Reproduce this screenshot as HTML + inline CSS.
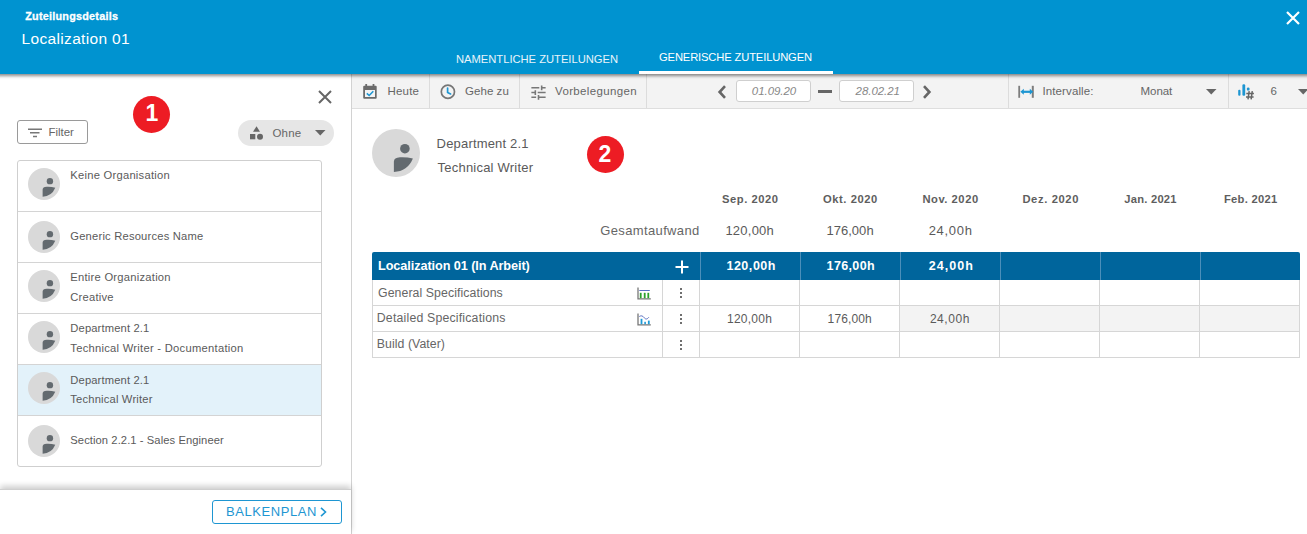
<!DOCTYPE html>
<html><head><meta charset="utf-8">
<style>
*{margin:0;padding:0;box-sizing:border-box}
html,body{width:1307px;height:534px;overflow:hidden;background:#fff;font-family:"Liberation Sans",sans-serif}
.a{position:absolute}
.t{position:absolute;white-space:nowrap;line-height:1;z-index:10}
svg{position:absolute;overflow:visible}
</style></head><body>
<!-- left panel -->
<div class="a" style="left:0;top:74px;width:351px;height:460px;background:#fff"></div>
<div class="a" style="left:351px;top:74px;width:1px;height:460px;background:#d2d2d2"></div>
<!-- toolbar -->
<div class="a" style="left:352px;top:74px;width:955px;height:35px;background:#f3f3f3;border-bottom:1px solid #dedede"></div>
<div class="a" style="left:429px;top:74px;width:1px;height:34px;background:#dcdcdc"></div>
<div class="a" style="left:519px;top:74px;width:1px;height:34px;background:#dcdcdc"></div>
<div class="a" style="left:646px;top:74px;width:1px;height:34px;background:#dcdcdc"></div>
<div class="a" style="left:1008px;top:74px;width:1px;height:34px;background:#dcdcdc"></div>
<div class="a" style="left:1228px;top:74px;width:1px;height:34px;background:#dcdcdc"></div>
<!-- header -->
<div class="a" style="left:-10px;top:0;width:1330px;height:74px;background:#0093d0;box-shadow:0 2px 3px rgba(0,0,0,0.45);z-index:5"></div>
<div class="a" style="left:639px;top:71px;width:194px;height:3px;background:#fff;z-index:6"></div>
<svg style="left:1286px;top:11px;z-index:6" width="14" height="14" viewBox="0 0 14 14"><path d="M1 1L13 13M13 1L1 13" stroke="#fff" stroke-width="2.2"/></svg>
<!-- left panel content -->
<svg style="left:318px;top:90px" width="14" height="14" viewBox="0 0 14 14"><path d="M1 1L13 13M13 1L1 13" stroke="#666" stroke-width="2"/></svg>
<div class="a" style="left:17px;top:120px;width:71px;height:24px;border:1px solid #9a9a9a;border-radius:3px"></div>
<svg style="left:28px;top:128px" width="15" height="10" viewBox="0 0 15 10"><path d="M0 1.3H14M2 4.8H11.5M5 8.5H9" stroke="#777" stroke-width="1.4"/></svg>
<div class="a" style="left:238px;top:120px;width:96px;height:26px;border-radius:13px;background:#e6e6e6"></div>
<svg style="left:249px;top:126px" width="15" height="14" viewBox="0 0 15 14"><path d="M7.5 0.3L11 5.7H4Z" fill="#666"/><rect x="1" y="8" width="5.3" height="5.3" fill="#666"/><circle cx="11" cy="10.8" r="3" fill="#666"/></svg>
<svg style="left:315px;top:130px" width="11" height="6" viewBox="0 0 11 6"><path d="M0 0H10.5L5.25 5.5Z" fill="#666"/></svg>
<div class="a" style="left:133px;top:96px;width:37px;height:37px;border-radius:50%;background:#ed1c24"></div>
<div class="a" style="left:587px;top:136px;width:37px;height:37px;border-radius:50%;background:#ed1c24"></div>
<!-- list -->
<div class="a" style="left:17px;top:160px;width:305px;height:307px;border:1px solid #cfcfcf;border-radius:3px;overflow:hidden">
  <div class="a" style="left:0;top:204px;width:303px;height:50px;background:#e3f2fa"></div>
  <div class="a" style="left:0;top:50px;width:303px;height:1px;background:#d4d4d4"></div>
  <div class="a" style="left:0;top:101px;width:303px;height:1px;background:#d4d4d4"></div>
  <div class="a" style="left:0;top:152px;width:303px;height:1px;background:#d4d4d4"></div>
  <div class="a" style="left:0;top:203px;width:303px;height:1px;background:#d4d4d4"></div>
  <div class="a" style="left:0;top:254px;width:303px;height:1px;background:#d4d4d4"></div>
</div>
<svg style="left:28px;top:168px" width="32" height="32" viewBox="0 0 48 48"><circle cx="24" cy="24" r="24" fill="#d9d9d9"/><circle cx="32.9" cy="19.7" r="4.8" fill="#636a6f"/><path d="M21.9 43V32.5Q21.9 28.6 28 28.3Q35 28 40.9 29.6Q35.5 42.6 21.9 43Z" fill="#636a6f"/></svg>
<svg style="left:28px;top:221px" width="32" height="32" viewBox="0 0 48 48"><circle cx="24" cy="24" r="24" fill="#d9d9d9"/><circle cx="32.9" cy="19.7" r="4.8" fill="#636a6f"/><path d="M21.9 43V32.5Q21.9 28.6 28 28.3Q35 28 40.9 29.6Q35.5 42.6 21.9 43Z" fill="#636a6f"/></svg>
<svg style="left:28px;top:270px" width="32" height="32" viewBox="0 0 48 48"><circle cx="24" cy="24" r="24" fill="#d9d9d9"/><circle cx="32.9" cy="19.7" r="4.8" fill="#636a6f"/><path d="M21.9 43V32.5Q21.9 28.6 28 28.3Q35 28 40.9 29.6Q35.5 42.6 21.9 43Z" fill="#636a6f"/></svg>
<svg style="left:28px;top:321px" width="32" height="32" viewBox="0 0 48 48"><circle cx="24" cy="24" r="24" fill="#d9d9d9"/><circle cx="32.9" cy="19.7" r="4.8" fill="#636a6f"/><path d="M21.9 43V32.5Q21.9 28.6 28 28.3Q35 28 40.9 29.6Q35.5 42.6 21.9 43Z" fill="#636a6f"/></svg>
<svg style="left:28px;top:372px" width="32" height="32" viewBox="0 0 48 48"><circle cx="24" cy="24" r="24" fill="#d9d9d9"/><circle cx="32.9" cy="19.7" r="4.8" fill="#636a6f"/><path d="M21.9 43V32.5Q21.9 28.6 28 28.3Q35 28 40.9 29.6Q35.5 42.6 21.9 43Z" fill="#636a6f"/></svg>
<svg style="left:28px;top:425px" width="32" height="32" viewBox="0 0 48 48"><circle cx="24" cy="24" r="24" fill="#d9d9d9"/><circle cx="32.9" cy="19.7" r="4.8" fill="#636a6f"/><path d="M21.9 43V32.5Q21.9 28.6 28 28.3Q35 28 40.9 29.6Q35.5 42.6 21.9 43Z" fill="#636a6f"/></svg>
<!-- footer -->
<div class="a" style="left:0;top:489px;width:351px;height:45px;background:#fff;border-top:1px solid #cfcfcf;box-shadow:0 -3px 6px rgba(0,0,0,0.2)"></div>
<div class="a" style="left:212px;top:500px;width:130px;height:24px;border:1px solid #1e96d2;border-radius:3px"></div>
<svg style="left:320px;top:507px" width="7" height="10" viewBox="0 0 7 10"><path d="M1 0.8L5.5 5L1 9.2" stroke="#1e96d2" stroke-width="1.6" fill="none"/></svg>
<!-- toolbar icons -->
<svg style="left:363px;top:84px" width="15" height="15" viewBox="0 0 15 15"><path fill-rule="evenodd" d="M1.2 1.8H12.7Q13.7 1.8 13.7 2.8V13.7Q13.7 14.7 12.7 14.7H1.2Q0.2 14.7 0.2 13.7V2.8Q0.2 1.8 1.2 1.8ZM2 6.1V13H12V6.1Z" fill="#6b6b6b"/><rect x="2.3" y="0" width="1.8" height="2.5" fill="#6b6b6b"/><rect x="9.6" y="0" width="1.8" height="2.5" fill="#6b6b6b"/><path d="M3.8 9.3L6.2 11.5L10.3 7.2" stroke="#1e96d2" stroke-width="1.6" fill="none"/></svg>
<svg style="left:440px;top:84px" width="16" height="16" viewBox="0 0 16 16"><circle cx="7.9" cy="7.8" r="6.6" fill="none" stroke="#767676" stroke-width="1.7"/><path d="M7.6 4.1V8.4L10.6 9.9" stroke="#1e96d2" stroke-width="1.7" fill="none" stroke-linecap="round" stroke-linejoin="round"/></svg>
<svg style="left:528.7px;top:82.7px" width="19" height="19" viewBox="0 0 24 24"><path d="M3 17v2h6v-2H3zM3 5v2h10V5H3zm10 16v-2h8v-2h-8v-2h-2v6h2zM7 9v2H3v2h4v2h2V9H7zm14 4v-2H11v2h10zm-6-4h2V7h4V5h-4V3h-2v6z" fill="#777"/></svg>
<svg style="left:717px;top:85px" width="10" height="14" viewBox="0 0 10 14"><path d="M8 1.2L2.6 7L8 12.8" stroke="#666" stroke-width="2.6" fill="none"/></svg>
<div class="a" style="left:736px;top:80px;width:75px;height:22px;background:#fff;border:1px solid #cfcfcf;border-radius:3px"></div>
<div class="a" style="left:818px;top:90px;width:14px;height:2.6px;background:#666"></div>
<div class="a" style="left:839px;top:80px;width:75px;height:22px;background:#fff;border:1px solid #cfcfcf;border-radius:3px"></div>
<svg style="left:922px;top:85px" width="10" height="14" viewBox="0 0 10 14"><path d="M2 1.2L7.4 7L2 12.8" stroke="#666" stroke-width="2.6" fill="none"/></svg>
<svg style="left:1018px;top:85px" width="16" height="13" viewBox="0 0 16 13"><rect x="0.3" y="0.8" width="1.8" height="12" fill="#7d7d7d"/><rect x="13.8" y="0.8" width="2" height="12" fill="#7d7d7d"/><path d="M5 6.8H12.5" stroke="#1e96d2" stroke-width="2.2"/><path d="M2.4 6.8L5.8 3.8V9.8Z M15.2 6.8L11.8 3.8V9.8Z" fill="#1e96d2"/></svg>
<svg style="left:1206px;top:89px" width="11" height="6" viewBox="0 0 11 6"><path d="M0 0H10.5L5.25 5.5Z" fill="#666"/></svg>
<svg style="left:1238px;top:84px" width="17" height="16" viewBox="0 0 17 16"><rect x="0.2" y="5.7" width="2.3" height="6" rx="1" fill="#1e96d2"/><rect x="4.4" y="0.3" width="2.8" height="11.4" rx="1.2" fill="#1e96d2"/><rect x="8.9" y="3.4" width="2.6" height="3.2" rx="1.2" fill="#1e96d2"/><path d="M11.2 7.2L10 15.3M14.3 7.2L13.1 15.3M8.3 9.6H15.9M8 12.9H15.6" stroke="#f3f3f3" stroke-width="3"/><path d="M11.2 7.2L10 15.3M14.3 7.2L13.1 15.3M8.3 9.6H15.9M8 12.9H15.6" stroke="#666" stroke-width="1.5"/></svg>
<svg style="left:1298px;top:89px" width="11" height="6" viewBox="0 0 11 6"><path d="M0 0H10.5L5.25 5.5Z" fill="#666"/></svg>
<!-- main avatar -->
<svg style="left:372px;top:129px" width="48" height="48" viewBox="0 0 48 48"><circle cx="24" cy="24" r="24" fill="#d9d9d9"/><circle cx="32.9" cy="19.7" r="4.8" fill="#636a6f"/><path d="M21.9 43V32.5Q21.9 28.6 28 28.3Q35 28 40.9 29.6Q35.5 42.6 21.9 43Z" fill="#636a6f"/></svg>
<!-- table -->
<div class="a" style="left:372px;top:252px;width:928px;height:28px;background:#00659c;border-radius:2px 2px 0 0"></div>
<div class="a" style="left:700px;top:252px;width:1px;height:28px;background:#4b8fba"></div>
<div class="a" style="left:800px;top:252px;width:1px;height:28px;background:#4b8fba"></div>
<div class="a" style="left:900px;top:252px;width:1px;height:28px;background:#4b8fba"></div>
<div class="a" style="left:1000px;top:252px;width:1px;height:28px;background:#4b8fba"></div>
<div class="a" style="left:1100px;top:252px;width:1px;height:28px;background:#4b8fba"></div>
<div class="a" style="left:1200px;top:252px;width:1px;height:28px;background:#4b8fba"></div>
<svg style="left:675px;top:260px" width="14" height="14" viewBox="0 0 14 14"><path d="M7 0.5V13.5M0.5 7H13.5" stroke="#fff" stroke-width="2"/></svg>
<div class="a" style="left:900px;top:306px;width:400px;height:25px;background:#f3f3f3"></div>
<div class="a" style="left:372px;top:280px;width:928px;height:78px;border:1px solid #d6d6d6;border-top:none"></div>
<div class="a" style="left:372px;top:305px;width:928px;height:1px;background:#d6d6d6"></div>
<div class="a" style="left:372px;top:331px;width:928px;height:1px;background:#d6d6d6"></div>
<div class="a" style="left:662px;top:280px;width:1px;height:77px;background:#d6d6d6"></div>
<div class="a" style="left:699px;top:280px;width:1px;height:77px;background:#d6d6d6"></div>
<div class="a" style="left:799px;top:280px;width:1px;height:77px;background:#d6d6d6"></div>
<div class="a" style="left:899px;top:280px;width:1px;height:77px;background:#d6d6d6"></div>
<div class="a" style="left:999px;top:280px;width:1px;height:77px;background:#d6d6d6"></div>
<div class="a" style="left:1099px;top:280px;width:1px;height:77px;background:#d6d6d6"></div>
<div class="a" style="left:1199px;top:280px;width:1px;height:77px;background:#d6d6d6"></div>
<!-- kebabs -->
<div class="a" style="left:679.75px;top:287.75px;width:2.5px;height:2.5px;border-radius:50%;background:#3f3f3f"></div>
<div class="a" style="left:679.75px;top:291.75px;width:2.5px;height:2.5px;border-radius:50%;background:#3f3f3f"></div>
<div class="a" style="left:679.75px;top:295.75px;width:2.5px;height:2.5px;border-radius:50%;background:#3f3f3f"></div>
<div class="a" style="left:679.75px;top:313.75px;width:2.5px;height:2.5px;border-radius:50%;background:#3f3f3f"></div>
<div class="a" style="left:679.75px;top:317.75px;width:2.5px;height:2.5px;border-radius:50%;background:#3f3f3f"></div>
<div class="a" style="left:679.75px;top:321.75px;width:2.5px;height:2.5px;border-radius:50%;background:#3f3f3f"></div>
<div class="a" style="left:679.75px;top:339.75px;width:2.5px;height:2.5px;border-radius:50%;background:#3f3f3f"></div>
<div class="a" style="left:679.75px;top:343.75px;width:2.5px;height:2.5px;border-radius:50%;background:#3f3f3f"></div>
<div class="a" style="left:679.75px;top:347.75px;width:2.5px;height:2.5px;border-radius:50%;background:#3f3f3f"></div>
<svg style="left:637px;top:287px" width="15" height="13" viewBox="0 0 15 13"><path d="M1 0.5V11.8H13.8" stroke="#777" stroke-width="1.3" fill="none"/><path d="M2.3 3.5H12.8" stroke="#5a6fc0" stroke-width="1"/><rect x="2.8" y="5.8" width="1.8" height="5.4" fill="#2aa02a"/><rect x="6.8" y="5.8" width="1.8" height="5.4" fill="#2aa02a"/><rect x="10.4" y="5.8" width="1.8" height="5.4" fill="#2aa02a"/></svg>
<svg style="left:637px;top:312.6px" width="15" height="13" viewBox="0 0 15 13"><path d="M1 0.5V11.8H13.8" stroke="#777" stroke-width="1.3" fill="none"/><rect x="3.6" y="5.8" width="1.8" height="5.4" fill="#1e9ad6"/><rect x="7.3" y="8.8" width="1.6" height="2.4" fill="#1e9ad6"/><rect x="10.9" y="7.6" width="1.8" height="3.6" fill="#1e9ad6"/><path d="M2.3 3.5C4 2.5 5.5 2.5 7 4.5C8.5 6.5 10 6.5 11.8 4.3" stroke="#5a6fc0" stroke-width="1" fill="none"/></svg>
<div class="t" style="left:25.2px;top:10.7px;font-size:10.8px;letter-spacing:0.25px;color:#fff;-webkit-text-stroke:0.3px #fff;font-weight:bold">Zuteilungsdetails</div>
<div class="t" style="left:21.5px;top:31.1px;font-size:15.5px;letter-spacing:0.34px;color:#fff;">Localization 01</div>
<div class="t" style="left:456.0px;top:54.2px;font-size:11.2px;letter-spacing:-0.01px;color:#e8f4fa;">NAMENTLICHE ZUTEILUNGEN</div>
<div class="t" style="left:659.0px;top:52.2px;font-size:11.2px;letter-spacing:-0.14px;color:#fff;">GENERISCHE ZUTEILUNGEN</div>
<div class="t" style="left:48.5px;top:126.8px;font-size:11.5px;letter-spacing:-0.05px;color:#666;">Filter</div>
<div class="t" style="left:272.5px;top:127.9px;font-size:11.5px;letter-spacing:0.15px;color:#666;">Ohne</div>
<div class="t" style="left:70.3px;top:170.1px;font-size:11.2px;letter-spacing:0.25px;color:#5a5a5a;">Keine Organisation</div>
<div class="t" style="left:70.3px;top:231.2px;font-size:11.2px;letter-spacing:0.20px;color:#5a5a5a;">Generic Resources Name</div>
<div class="t" style="left:70.3px;top:272.2px;font-size:11.2px;letter-spacing:0.25px;color:#5a5a5a;">Entire Organization</div>
<div class="t" style="left:70.3px;top:292.2px;font-size:11.2px;letter-spacing:0.21px;color:#5a5a5a;">Creative</div>
<div class="t" style="left:70.3px;top:323.4px;font-size:11.2px;letter-spacing:0.14px;color:#5a5a5a;">Department 2.1</div>
<div class="t" style="left:70.3px;top:343.1px;font-size:11.2px;letter-spacing:0.27px;color:#5a5a5a;">Technical Writer - Documentation</div>
<div class="t" style="left:70.3px;top:374.6px;font-size:11.2px;letter-spacing:0.14px;color:#5a5a5a;">Department 2.1</div>
<div class="t" style="left:70.3px;top:394.2px;font-size:11.2px;letter-spacing:0.18px;color:#5a5a5a;">Technical Writer</div>
<div class="t" style="left:70.3px;top:435.2px;font-size:11.2px;letter-spacing:0.08px;color:#5a5a5a;">Section 2.2.1 - Sales Engineer</div>
<div class="t" style="left:226.0px;top:505.4px;font-size:13px;letter-spacing:0.57px;color:#1e96d2;">BALKENPLAN</div>
<div class="t" style="left:387.5px;top:86.0px;font-size:11.5px;letter-spacing:0.18px;color:#666;">Heute</div>
<div class="t" style="left:465.0px;top:86.0px;font-size:11.5px;letter-spacing:0.05px;color:#666;">Gehe zu</div>
<div class="t" style="left:555.0px;top:86.0px;font-size:11.5px;letter-spacing:0.35px;color:#666;">Vorbelegungen</div>
<div class="t" style="left:751.8px;top:86.1px;font-size:11.5px;letter-spacing:-0.05px;color:#888;font-style:italic">01.09.20</div>
<div class="t" style="left:855.6px;top:86.1px;font-size:11.5px;letter-spacing:-0.05px;color:#888;font-style:italic">28.02.21</div>
<div class="t" style="left:1042.5px;top:86.0px;font-size:11.5px;letter-spacing:0.11px;color:#666;">Intervalle:</div>
<div class="t" style="left:1140.6px;top:86.0px;font-size:11.5px;letter-spacing:-0.09px;color:#666;">Monat</div>
<div class="t" style="left:1270.6px;top:86.0px;font-size:11.5px;letter-spacing:0.30px;color:#666;">6</div>
<div class="t" style="left:436.6px;top:137.0px;font-size:13px;letter-spacing:0.18px;color:#5a5a5a;">Department 2.1</div>
<div class="t" style="left:437.6px;top:160.7px;font-size:13px;letter-spacing:0.21px;color:#5a5a5a;">Technical Writer</div>
<div class="t" style="left:722.0px;top:193.9px;font-size:11.2px;letter-spacing:0.54px;color:#5e5e5e;font-weight:bold">Sep. 2020</div>
<div class="t" style="left:823.0px;top:193.9px;font-size:11.2px;letter-spacing:0.56px;color:#5e5e5e;font-weight:bold">Okt. 2020</div>
<div class="t" style="left:922.4px;top:193.9px;font-size:11.2px;letter-spacing:0.54px;color:#5e5e5e;font-weight:bold">Nov. 2020</div>
<div class="t" style="left:1022.4px;top:193.9px;font-size:11.2px;letter-spacing:0.63px;color:#5e5e5e;font-weight:bold">Dez. 2020</div>
<div class="t" style="left:1124.3px;top:193.9px;font-size:11.2px;letter-spacing:0.23px;color:#5e5e5e;font-weight:bold">Jan. 2021</div>
<div class="t" style="left:1224.0px;top:193.9px;font-size:11.2px;letter-spacing:0.28px;color:#5e5e5e;font-weight:bold">Feb. 2021</div>
<div class="t" style="left:600.3px;top:224.0px;font-size:13px;letter-spacing:0.36px;color:#666;">Gesamtaufwand</div>
<div class="t" style="left:725.4px;top:224.0px;font-size:13px;letter-spacing:0.24px;color:#5a5a5a;">120,00h</div>
<div class="t" style="left:826.4px;top:224.0px;font-size:13px;letter-spacing:0.04px;color:#5a5a5a;">176,00h</div>
<div class="t" style="left:928.7px;top:224.0px;font-size:13px;letter-spacing:0.69px;color:#5a5a5a;">24,00h</div>
<div class="t" style="left:378.0px;top:259.7px;font-size:12.7px;letter-spacing:-0.08px;color:#fff;font-weight:bold">Localization 01 (In Arbeit)</div>
<div class="t" style="left:726.4px;top:259.8px;font-size:12.5px;letter-spacing:0.54px;color:#fff;font-weight:bold">120,00h</div>
<div class="t" style="left:826.6px;top:259.8px;font-size:12.5px;letter-spacing:0.36px;color:#fff;font-weight:bold">176,00h</div>
<div class="t" style="left:928.8px;top:259.8px;font-size:12.5px;letter-spacing:1.02px;color:#fff;font-weight:bold">24,00h</div>
<div class="t" style="left:378.0px;top:286.6px;font-size:12.3px;letter-spacing:0.08px;color:#666;">General Specifications</div>
<div class="t" style="left:376.8px;top:312.4px;font-size:12.3px;letter-spacing:0.19px;color:#666;">Detailed Specifications</div>
<div class="t" style="left:376.8px;top:338.2px;font-size:12.3px;letter-spacing:0.06px;color:#666;">Build (Vater)</div>
<div class="t" style="left:727.0px;top:313.0px;font-size:12px;letter-spacing:0.25px;color:#5a5a5a;">120,00h</div>
<div class="t" style="left:827.6px;top:313.0px;font-size:12px;letter-spacing:0.12px;color:#5a5a5a;">176,00h</div>
<div class="t" style="left:929.9px;top:313.0px;font-size:12px;letter-spacing:0.55px;color:#5a5a5a;">24,00h</div>
<div class="t" style="left:145.5px;top:101.6px;font-size:23px;font-weight:bold;color:#fff">1</div>
<div class="t" style="left:598.5px;top:142.5px;font-size:23px;font-weight:bold;color:#fff">2</div>
</body></html>
